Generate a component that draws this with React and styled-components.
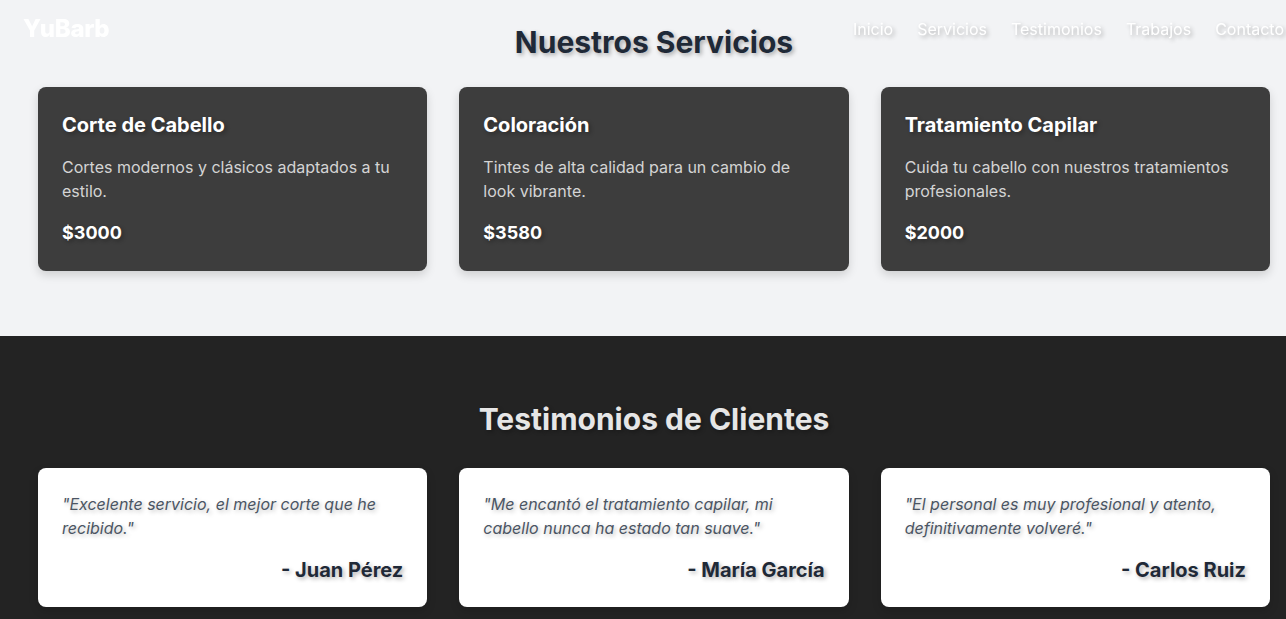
import styled, { createGlobalStyle } from 'styled-components';

const GlobalStyle = createGlobalStyle`
  * { box-sizing: border-box; }
  html, body {
    margin: 0;
    padding: 0;
    overflow-x: hidden;
    font-family: Inter, "Noto Sans", sans-serif;
    background-color: #f2f3f5;
  }
  h1, h2, h3, p { margin: 0; }
`;

const Header = styled.header`
  position: fixed;
  top: 0;
  left: 0;
  right: 0;
  height: 57px;
  display: flex;
  align-items: center;
  justify-content: space-between;
  padding: 0 2px 0 23px;
  z-index: 10;
`;

const Logo = styled.div`
  color: #ffffff;
  font-size: 24px;
  font-weight: 800;
  letter-spacing: -0.3px;
  margin-top: -1px;
`;

const Nav = styled.nav`
  display: flex;
  align-items: center;
  gap: 24px;
`;

const NavLink = styled.a`
  color: #ffffff;
  font-size: 16px;
  text-decoration: none;
  text-shadow: 2px 2px 4px rgba(0, 0, 0, 0.3);
`;

const Section = styled.section`
  background-color: ${(p) => (p.$dark ? '#232323' : '#f2f3f5')};
  padding: ${(p) => (p.$dark ? '64px' : '23px')} 16px 65px 38px;
`;

const SectionTitle = styled.h2`
  text-align: center;
  font-size: 30px;
  font-weight: 700;
  line-height: 38px;
  color: ${(p) => (p.$light ? '#e6e6e6' : '#1f2937')};
  text-shadow: 2px 2px 4px rgba(0, 0, 0, 0.3);
  margin-bottom: ${(p) => (p.$light ? '30px' : '26px')};
`;

const Grid = styled.div`
  display: grid;
  grid-template-columns: repeat(3, 1fr);
  gap: 32px;
  width: 1232px;
`;

const ServiceCard = styled.div`
  background-color: #3d3d3d;
  border-radius: 8px;
  padding: 24px 24px 24px;
  box-shadow: 0 4px 10px rgba(0, 0, 0, 0.15);
`;

const CardTitle = styled.h3`
  color: #ffffff;
  font-size: 20px;
  font-weight: 700;
  line-height: 28px;
  text-shadow: 2px 2px 4px rgba(0, 0, 0, 0.3);
  margin-bottom: 16px;
`;

const CardText = styled.p`
  color: #d4d4d4;
  font-size: 16px;
  line-height: 24px;
  margin-bottom: 16px;
`;

const Price = styled.p`
  color: #ffffff;
  font-size: 18px;
  font-weight: 700;
  line-height: 28px;
  text-shadow: 2px 2px 4px rgba(0, 0, 0, 0.3);
`;

const TestimonialCard = styled.div`
  background-color: #ffffff;
  border-radius: 8px;
  padding: 24px 24px 23px;
  box-shadow: 0 4px 10px rgba(0, 0, 0, 0.15);
`;

const Quote = styled.p`
  color: #4b5563;
  font-size: 16px;
  font-style: italic;
  line-height: 24px;
  text-shadow: 2px 2px 4px rgba(0, 0, 0, 0.25);
  margin-bottom: 16px;
`;

const Author = styled.p`
  color: #1f2937;
  font-size: 20px;
  font-weight: 700;
  line-height: 28px;
  text-align: right;
  text-shadow: 2px 2px 4px rgba(0, 0, 0, 0.3);
`;

const services = [
  {
    title: 'Corte de Cabello',
    text: 'Cortes modernos y clásicos adaptados a tu estilo.',
    price: '$3000',
  },
  {
    title: 'Coloración',
    text: 'Tintes de alta calidad para un cambio de look vibrante.',
    price: '$3580',
  },
  {
    title: 'Tratamiento Capilar',
    text: 'Cuida tu cabello con nuestros tratamientos profesionales.',
    price: '$2000',
  },
];

const testimonials = [
  {
    quote: '"Excelente servicio, el mejor corte que he recibido."',
    author: '- Juan Pérez',
  },
  {
    quote: '"Me encantó el tratamiento capilar, mi cabello nunca ha estado tan suave."',
    author: '- María García',
  },
  {
    quote: '"El personal es muy profesional y atento, definitivamente volveré."',
    author: '- Carlos Ruiz',
  },
];

const App = () => {
  return (
    <>
      <GlobalStyle />
      <Header>
        <Logo>YuBarb</Logo>
        <Nav>
          <NavLink href="#inicio">Inicio</NavLink>
          <NavLink href="#servicios">Servicios</NavLink>
          <NavLink href="#testimonios">Testimonios</NavLink>
          <NavLink href="#trabajos">Trabajos</NavLink>
          <NavLink href="#contacto">Contacto</NavLink>
        </Nav>
      </Header>
      <Section id="servicios">
        <SectionTitle>Nuestros Servicios</SectionTitle>
        <Grid>
          {services.map((s) => (
            <ServiceCard key={s.title}>
              <CardTitle>{s.title}</CardTitle>
              <CardText>{s.text}</CardText>
              <Price>{s.price}</Price>
            </ServiceCard>
          ))}
        </Grid>
      </Section>
      <Section $dark id="testimonios">
        <SectionTitle $light>Testimonios de Clientes</SectionTitle>
        <Grid>
          {testimonials.map((t) => (
            <TestimonialCard key={t.author}>
              <Quote>{t.quote}</Quote>
              <Author>{t.author}</Author>
            </TestimonialCard>
          ))}
        </Grid>
      </Section>
    </>
  );
};

export default App;
